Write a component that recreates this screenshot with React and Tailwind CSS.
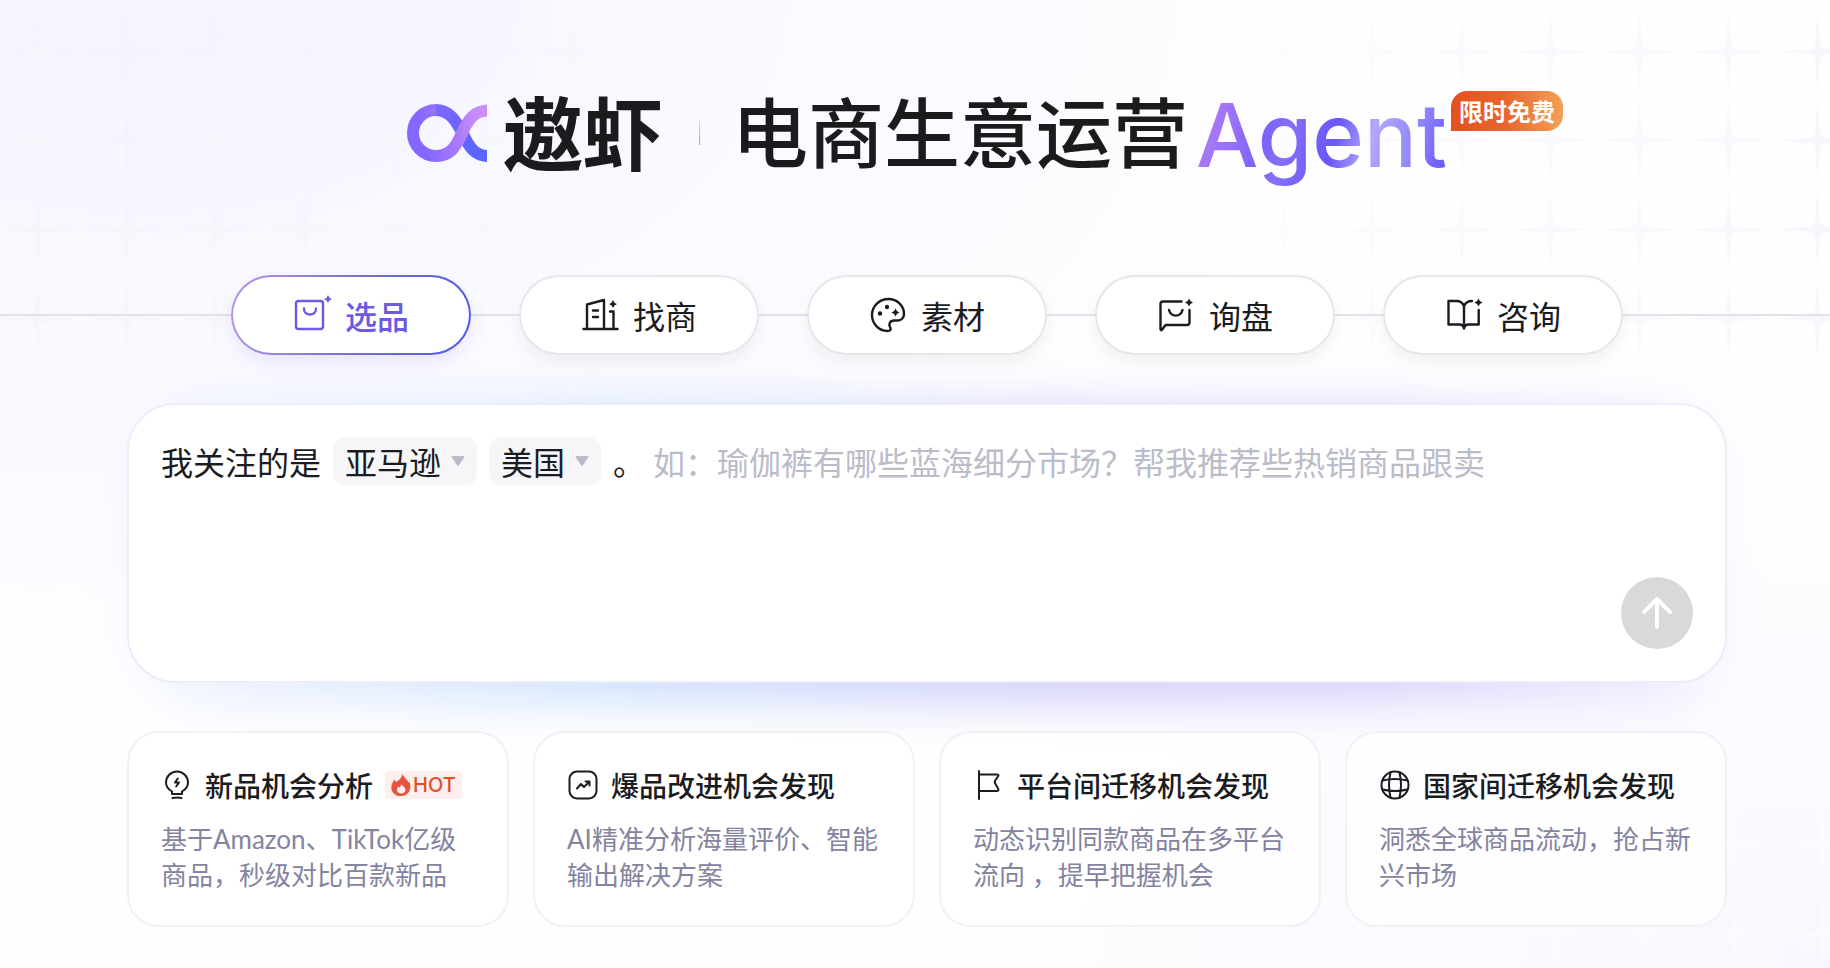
import { useState } from 'react';

const Star = ({ x, y, r = 4 }) => (
    <path
        d={`M${x} ${y - r}q${r * 0.2} ${r * 0.8} ${r} ${r}q${-r * 0.8} ${r * 0.2} ${-r} ${r}q${-r * 0.2} ${-r * 0.8} ${-r} ${-r}q${r * 0.8} ${-r * 0.2} ${r} ${-r}z`}
        fill="currentColor"
        stroke="none"
    />
);

const TABS = [
    {
        key: 'select',
        label: '选品',
        icon: (
            <>
                <rect x="3" y="6" width="27" height="28" rx="2.5" />
                <path d="M11 13.500c0 8 12 8 12 0" />
                <Star x={35} y={4} />
            </>
        ),
    },
    {
        key: 'supplier',
        label: '找商',
        icon: (
            <>
                <path d="M2.500 34h34M6 34V9.500l17-4.500V34M12 15.500h5M12 22h5M29 16.500h3.500V34" />
                <Star x={32} y={9} />
            </>
        ),
    },
    {
        key: 'material',
        label: '素材',
        icon: (
            <>
                <path d="M35 19C35 10.500 28 4 19.500 4 10.500 4 3 11 3 20c0 8.500 6.500 16 15.500 16 3 0 4-1.500 2.500-4-1.500-3 0-6.500 4-6.500h4c3.500 0 6-3 6-6.500z" />
                <circle cx="18" cy="12" r="2.200" fill="currentColor" stroke="none" />
                <circle cx="11" cy="18.500" r="2.200" fill="currentColor" stroke="none" />
                <Star x={26.5} y={17.5} />
            </>
        ),
    },
    {
        key: 'inquiry',
        label: '询盘',
        icon: (
            <>
                <path d="M24.500 6.500H6a2.500 2.500 0 0 0-2.500 2.500v25.500q.8 1.500 1.700 0L8.500 30H30a2.500 2.500 0 0 0 2.500-2.500V15" />
                <path d="M12 15c2 7.500 11.500 7.500 13.500 0" />
                <Star x={32} y={7.5} />
            </>
        ),
    },
    {
        key: 'consult',
        label: '咨询',
        icon: (
            <>
                <path d="M19 33.500V11c-1.500-3.500-4-5-7.500-5h-8v23.500h11c2.500 0 4 1.500 4.500 4 .5-2.500 2-4 4.500-4h10.200V15" />
                <path d="M19 11c1.500-3.500 4-5 8-5" />
                <Star x={33.5} y={7.5} />
            </>
        ),
    },
];

const CARDS = [
    {
        title: '新品机会分析',
        desc: '基于Amazon、TikTok亿级商品，秒级对比百款新品',
        hot: true,
        icon: (
            <>
                <path d="M11 25v-2.500C7.500 20.500 5 17.500 5 13.500a11 11 0 0 1 22 0c0 4-2.500 7-6 9V25z" />
                <path d="M11.500 29q4.500-.8 9 0M16.800 9.500 14 13.500h4L15.200 17.500" />
            </>
        ),
    },
    {
        title: '爆品改进机会发现',
        desc: 'AI精准分析海量评价、智能输出解决方案',
        icon: (
            <>
                <rect x="2.500" y="2.500" width="27" height="27" rx="7.500" />
                <path d="m10 19.500 4-4.500 3 3 5.500-5.500M18.500 12.500h4v4" />
            </>
        ),
    },
    {
        title: '平台间迁移机会发现',
        desc: '动态识别同款商品在多平台流向 ，提早把握机会',
        icon: <path d="M6 2v28M6 5.500h17.500q3 0 1.500 2l-2.500 3.500q-1.500 2 0 4l2.500 4.500q1.500 2.500-1.500 2.500H6" />,
    },
    {
        title: '国家间迁移机会发现',
        desc: '洞悉全球商品流动，抢占新兴市场',
        icon: (
            <>
                <circle cx="16" cy="16" r="13.500" />
                <path d="M11.500 3.500q-3 12.500 0 25M20.500 3.500q3 12.500 0 25M3.500 11.500q12.500-3 25 0M3.500 20.500q12.500 3 25 0" />
            </>
        ),
    },
];

const SPARKLE = 'M44.500 6 47 36Q47.500 41.500 53 42L83 44.500 53 47Q47.500 47.500 47 53L44.500 83 42 53Q41.500 47.500 36 47L6 44.500 36 42Q41.500 41.500 42 36z';

function Backdrop() {
    return (
        <div aria-hidden="true" className="absolute inset-0 -z-10 bg-[#fefeff]">
            <div className="absolute inset-0 bg-[radial-gradient(ellipse_at_8%_0%,#f5f4ff_0%,#f9f9ff_25%,transparent_50%),radial-gradient(ellipse_at_100%_100%,#f7f7ff_0%,transparent_35%),radial-gradient(ellipse_at_0%_45%,#f9f9ff_0%,transparent_20%)]" />
            <svg className="absolute inset-0 h-full w-full mask-[linear-gradient(100deg,black_0%,transparent_35%,transparent_60%,black_100%)]">
                <defs>
                    <pattern id="sparkles" width="89" height="89" patternUnits="userSpaceOnUse" x="-7" y="7">
                        <path d={SPARKLE} fill="#f4f4fb" />
                    </pattern>
                    <pattern id="sparkles-light" width="89" height="89" patternUnits="userSpaceOnUse" x="-2" y="-1">
                        <path d={SPARKLE} fill="#ffffff" opacity="0.500" />
                    </pattern>
                </defs>
                <rect width="100%" height="362" fill="url(#sparkles)" />
                <rect y="800" width="100%" height="200" fill="url(#sparkles-light)" />
            </svg>
        </div>
    );
}

function Logo() {
    return (
        <svg viewBox="0 0 80 60" fill="none" strokeWidth="12" className="h-[60px] w-20 shrink-0" aria-hidden="true">
            <defs>
                <linearGradient id="under" gradientUnits="userSpaceOnUse" x1="20" y1="0" x2="75" y2="50">
                    <stop stopColor="#8467ff" />
                    <stop offset="1" stopColor="#5a64ff" />
                </linearGradient>
                <linearGradient id="over" gradientUnits="userSpaceOnUse" x1="14" y1="20" x2="72" y2="8">
                    <stop stopColor="#8667ff" />
                    <stop offset="0.600" stopColor="#ad7efb" />
                    <stop offset="1" stopColor="#c98ff9" />
                </linearGradient>
            </defs>
            <path d="M28 7C43 7 49 18 56 31 62 44 68 53 81 53" stroke="url(#under)" />
            <path d="M29 7A23 23 0 0 0 29 53C43 53 49 44 55 30 61 17 67 7.500 81 7.500" stroke="url(#over)" />
        </svg>
    );
}

function Header() {
    return (
        <h1 className="flex h-[92px] items-center justify-center leading-[92px] whitespace-nowrap text-[#1b1b1d]">
            <Logo />
            <span className="ml-4 pb-2 text-[80px] font-bold">遨虾</span>
            <span className="ml-9 h-6 w-px bg-linear-to-b from-[#dcd3f7] to-[#a99be8]" />
            <span className="ml-8 pb-2 text-[76px] font-medium">电商生意运营</span>
            <span className="relative ml-2 flex pt-1">
                <span className="bg-[linear-gradient(105deg,#b47ff5_4%,#7d64fb_30%,#8570f6_38%,#6856fc_55%,#b2a8fb_68%,#9187fa_84%,#6552fd_98%)] bg-clip-text font-[Inter,sans-serif] text-[88px] leading-[112px] font-medium text-transparent">
                    Agent
                </span>
                <span className="absolute top-4 left-full ml-1 rounded-2xl rounded-bl-none bg-linear-to-r from-[#e4501b] via-[#e9662f] to-[#f1a157] px-2 text-2xl leading-10 font-bold text-white">
                    限时免费
                </span>
            </span>
        </h1>
    );
}

function Tabs() {
    const [active, setActive] = useState('select');

    return (
        <nav className="relative mt-24">
            <div className="absolute inset-x-0 top-1/2 -mt-px h-0.5 bg-[#e2e2e8]" />
            <div className="relative flex justify-center gap-12 pl-6">
                {TABS.map((t) => (
                    <button
                        key={t.key}
                        type="button"
                        onClick={() => setActive(t.key)}
                        className={
                            'flex h-20 w-60 items-center justify-center gap-3 rounded-full border-2 text-[32px] ' +
                            (active === t.key
                                ? 'border-transparent bg-[linear-gradient(#fff,#fff),linear-gradient(100deg,#b996e6,#7d6fc8_50%,#4c5bea)] bg-origin-border [background-clip:padding-box,border-box] font-medium text-[#6a5be2] shadow-[0_8px_16px_#6a5be21c]'
                                : 'border-[#e7e7ea] bg-white text-[#1b1b22] shadow-[0_8px_16px_#0000000d]')
                        }
                    >
                        <svg
                            viewBox="0 0 40 40"
                            fill="none"
                            stroke="currentColor"
                            strokeWidth="2.400"
                            strokeLinecap="round"
                            strokeLinejoin="round"
                            className="size-10"
                        >
                            {t.icon}
                        </svg>
                        {t.label}
                    </button>
                ))}
            </div>
        </nav>
    );
}

function Picker({ label, value }) {
    return (
        <span className="relative mr-3">
            <select
                aria-label={label}
                className="block h-12 appearance-none rounded-xl bg-[#f6f6f9] pr-[35px] pl-3 text-[32px] leading-[48px]"
            >
                <option>{value}</option>
            </select>
            <svg viewBox="0 0 14 10" className="pointer-events-none absolute top-[19px] right-3 h-[10px] w-[14px]">
                <path d="M1.500 0h11q1.500 0 .8 1.300L8 9.200q-1 1-2 0L.7 1.300Q0 0 1.500 0z" fill="#bcbbca" />
            </svg>
        </span>
    );
}

function Prompt() {
    return (
        <form className="relative mt-12" onSubmit={(e) => e.preventDefault()}>
            <div className="absolute inset-x-4 top-2 -bottom-4 rounded-[64px] bg-[linear-gradient(90deg,#eef2ff,#c8defd_30%,#cdc8fa_60%,#d5cdfb_78%,#efecff)] blur-xl" />
            <div className="relative flex h-[280px] items-start rounded-[48px] border-2 border-[#ecedfa] bg-white p-8 text-[32px] leading-[48px] text-[#1b1b22]">
                <span className="mr-3">我关注的是</span>
                <Picker label="平台" value="亚马逊" />
                <Picker label="国家" value="美国" />
                <span className="mr-2">。</span>
                <textarea
                    aria-label="需求描述"
                    placeholder="如：瑜伽裤有哪些蓝海细分市场？帮我推荐些热销商品跟卖"
                    className="h-full min-w-0 flex-1 resize-none outline-none placeholder:text-[#bbbcca]"
                />
                <button
                    type="submit"
                    aria-label="发送"
                    className="flex size-[72px] shrink-0 items-center justify-center self-end rounded-full bg-[#d9d9d9] text-white"
                >
                    <svg
                        viewBox="0 0 36 36"
                        fill="none"
                        stroke="currentColor"
                        strokeWidth="4"
                        strokeLinecap="round"
                        strokeLinejoin="round"
                        className="size-9"
                    >
                        <path d="M18 32V4M5 17 18 4l13 13" />
                    </svg>
                </button>
            </div>
        </form>
    );
}

function HotBadge() {
    return (
        <span className="flex h-7 items-center gap-0.5 rounded bg-[#feeeec] px-1.5 font-[Inter,sans-serif] text-xl font-medium text-[#e0502a]">
            <svg viewBox="0 0 20 22" className="h-[22px] w-5">
                <path
                    d="M11.500 0c.5 3 5 5 6 9 .4-.6.6-1.200.7-2 3.500 8-1 15-8.200 15S-.5 17 .5 11.500C1 9 2.500 8 3 5.500c1 .7 1.500 1.500 1.800 2.500C8 6.500 10.500 4 11.500 0z"
                    fill="#e6533f"
                />
                <path d="M10.500 10c.3 1.800 4 3 4 5.800 0 2.200-1.900 3.700-4.300 3.700S6 18 6 15.800c0-1.500.8-2.500 1.400-3.300.4.6.7.8 1.100 1 .9-1 1.600-2 2-3.500z" fill="#fff1ee" />
            </svg>
            HOT
        </span>
    );
}

function Cards() {
    return (
        <div className="relative mt-12 grid grid-cols-4 gap-6">
            {CARDS.map((c) => (
                <a
                    key={c.title}
                    href="#"
                    className="rounded-[32px] border-2 border-[#f1f1f4] bg-white/80 p-8"
                >
                    <div className="flex h-10 items-center gap-3">
                        <svg
                            viewBox="0 0 32 32"
                            fill="none"
                            stroke="#1b1b22"
                            strokeWidth="2"
                            strokeLinecap="round"
                            strokeLinejoin="round"
                            className="size-8 shrink-0"
                        >
                            {c.icon}
                        </svg>
                        <h2 className="text-[28px] font-medium whitespace-nowrap text-[#1b1b22]">{c.title}</h2>
                        {c.hot && <HotBadge />}
                    </div>
                    <p className="mt-4 font-[Lato,'Noto_Sans_CJK_SC',sans-serif] text-[26px] leading-9 text-[#8483a0]">
                        {c.desc}
                    </p>
                </a>
            ))}
        </div>
    );
}

export default function App() {
    return (
        <div
            lang="zh-CN"
            className="relative isolate min-h-screen overflow-hidden pt-[87px] pb-10 font-['Noto_Sans_CJK_SC',sans-serif]"
        >
            <Backdrop />
            <div className="pl-6">
                <Header />
            </div>
            <Tabs />
            <main className="pl-6">
                <div className="mx-auto max-w-[1600px]">
                    <Prompt />
                    <Cards />
                </div>
            </main>
        </div>
    );
}
